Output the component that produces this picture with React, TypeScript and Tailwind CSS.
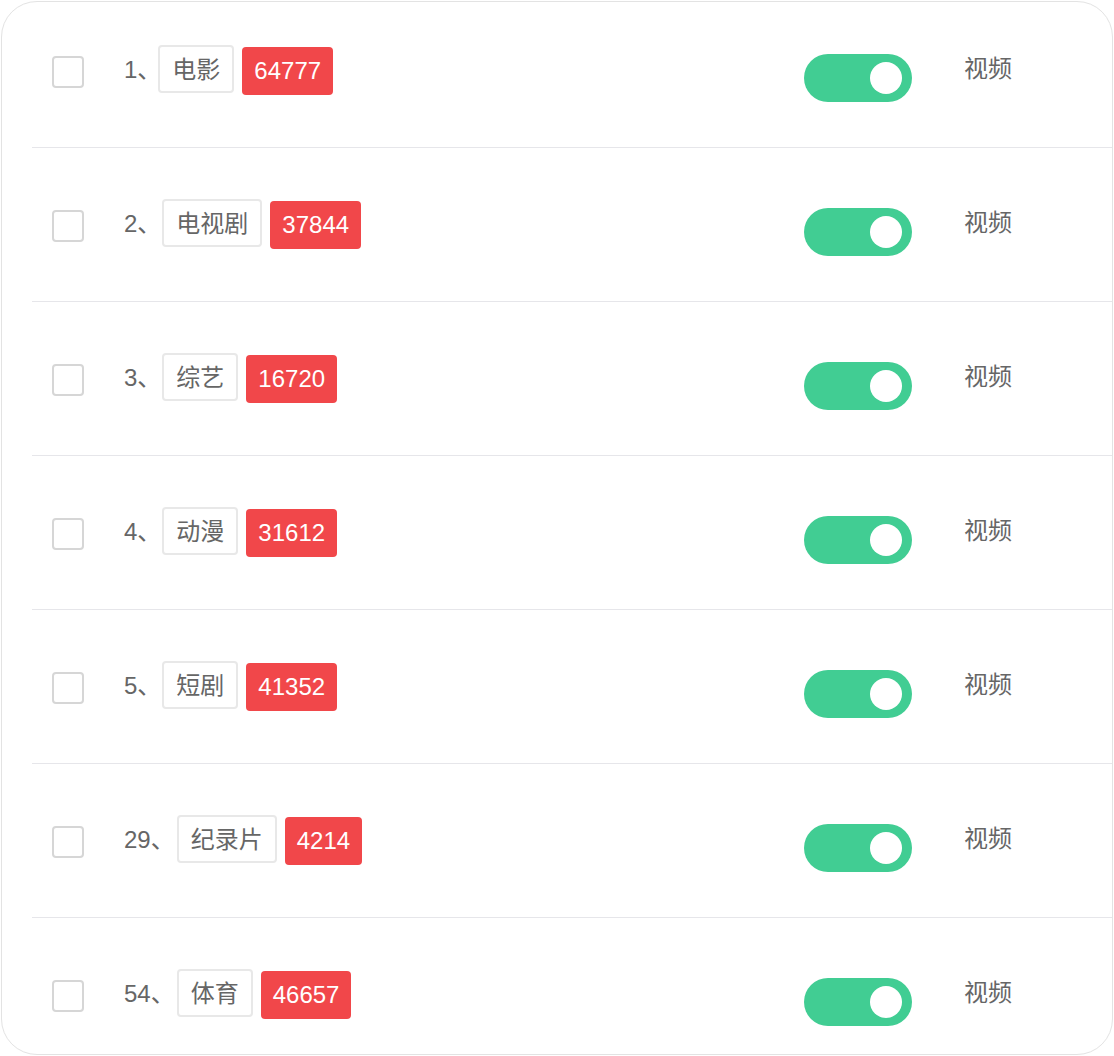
import React from "react";

const rows = [
  { n: "1、", tag: "电影", count: "64777", shift: "ml-[-3px]" },
  { n: "2、", tag: "电视剧", count: "37844", shift: "ml-[1px]" },
  { n: "3、", tag: "综艺", count: "16720", shift: "ml-[1px]" },
  { n: "4、", tag: "动漫", count: "31612", shift: "ml-[1px]" },
  { n: "5、", tag: "短剧", count: "41352", shift: "ml-[1px]" },
  { n: "29、", tag: "纪录片", count: "4214", shift: "ml-[2px]" },
  { n: "54、", tag: "体育", count: "46657", shift: "ml-[2px]" },
];

const font = { fontFamily: '"Liberation Sans", "Noto Sans CJK SC", sans-serif' };

function Row({ n, tag, count, shift }: { n: string; tag: string; count: string; shift: string }) {
  return (
    <div className="ml-[30px] h-[154px] border-b border-[#e6e6ea] flex items-start pt-[51px] pl-[20px] pr-[100px]">
      <div className="mt-[11px] w-[32px] h-[32px] rounded-[4px] border-2 border-[#d6d6d6] bg-white shrink-0" />
      <div className="flex-1 flex items-start ml-[40px]">
        <div className="h-[48px] flex items-center text-[24px] leading-[24px] text-[#666] mt-[1px]">{n}</div>
        <div className={`${shift} h-[48px] px-[12px] flex items-center border-2 border-[#e8e8e8] rounded-[4px] text-[24px] leading-[24px] text-[#666]`}>
          <span className="mt-[2px]">{tag}</span>
        </div>
        <div className="ml-[8px] mt-[2px] h-[48px] px-[12px] flex items-center rounded-[4px] bg-[#f1474a] text-white text-[24px] leading-[24px]">
          {count}
        </div>
      </div>
      <div className="mt-[9px] w-[108px] h-[48px] rounded-full bg-[#41cd93] flex items-center justify-end pr-[10px] shrink-0">
        <div className="w-[32px] h-[32px] rounded-full bg-white" />
      </div>
      <div className="ml-[52px] mt-[12px] text-[24px] leading-[24px] text-[#666] shrink-0">视频</div>
    </div>
  );
}

export default function App() {
  return (
    <div className="w-[1114px] h-[1056px] bg-white p-[1px]" style={font}>
      <div className="w-[1112px] h-[1054px] border border-[#e3e3e3] rounded-[36px] overflow-hidden bg-white">
        <div className="-mt-[8px]">
          {rows.map((r) => (
            <Row key={r.n} {...r} />
          ))}
        </div>
      </div>
    </div>
  );
}
